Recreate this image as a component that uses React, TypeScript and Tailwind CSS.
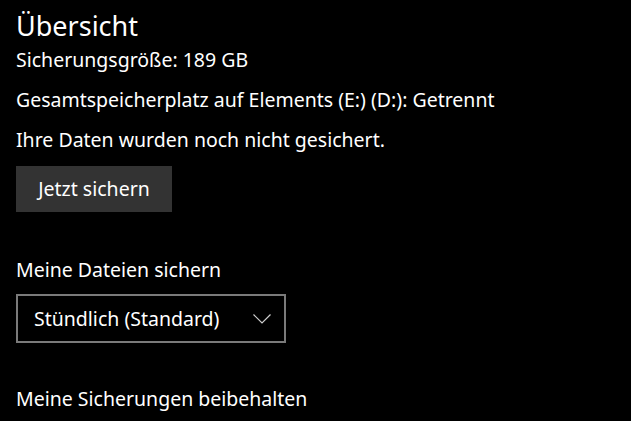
export default function App() {
  return (
    <div
      className="w-[631px] h-[421px] overflow-hidden bg-black text-white pl-4"
      style={{ fontFamily: '"Noto Sans", "Open Sans", sans-serif' }}
    >
      <h1 className="pt-[8px] text-[27px] leading-[36px] font-normal">Übersicht</h1>
      <p className="mt-[4px] text-[19.5px] leading-[24px]">Sicherungsgröße: 189 GB</p>
      <p className="mt-[16px] text-[19.5px] leading-[24px]">
        Gesamtspeicherplatz auf Elements (E:) (D:): Getrennt
      </p>
      <p className="mt-[16px] text-[19.5px] leading-[24px]">Ihre Daten wurden noch nicht gesichert.</p>
      <button className="mt-[14px] w-[156px] h-[46px] bg-[#333333] text-[19.5px] text-white">
        Jetzt sichern
      </button>

      <p className="mt-[46px] text-[19.5px] leading-[24px]">Meine Dateien sichern</p>
      <div className="mt-[12px] w-[270px] h-[49px] border-2 border-[#7a7a7a] flex items-center justify-between pl-[16px] pr-[13px]">
        <span className="text-[19.5px]">Stündlich (Standard)</span>
        <svg width="18" height="10" viewBox="0 0 18 10" fill="none">
          <path d="M0.5 0.5 L9 9 L17.5 0.5" stroke="#cfcfcf" strokeWidth="1.2" />
        </svg>
      </div>

      <p className="mt-[44px] text-[19.5px] leading-[24px]">Meine Sicherungen beibehalten</p>
    </div>
  );
}
